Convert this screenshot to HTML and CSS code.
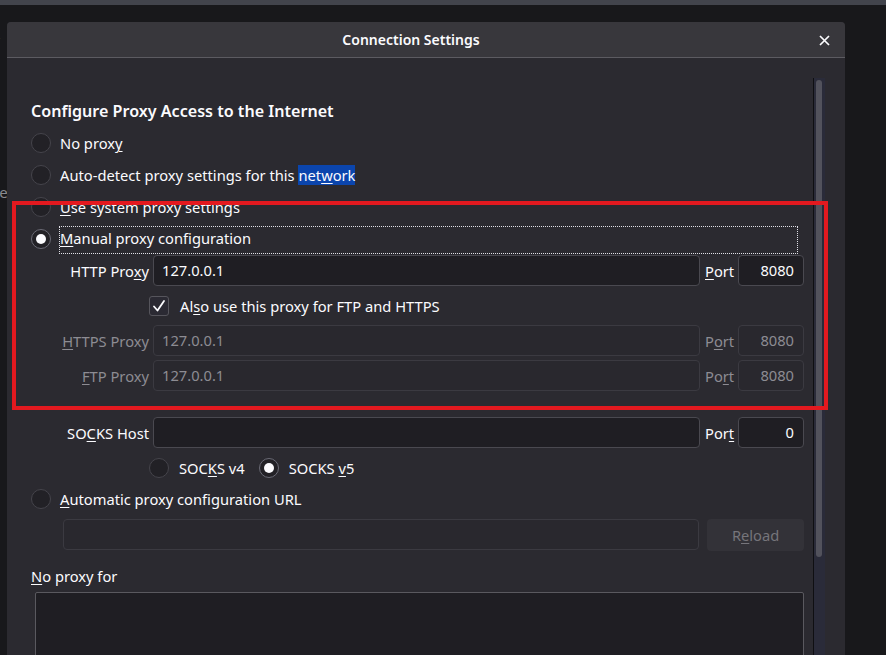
FILE: index.html
```html
<!DOCTYPE html>
<html>
<head>
<meta charset="utf-8">
<link rel="stylesheet" href="styles.css">
</head>
<body>
<div class="topstrip"></div>
<div class="behind"><span class="behind-r">r</span><span class="behind-e">ne</span></div>
<div class="dialog">
  <div class="titlebar">
    <div class="title">Connection Settings</div>
    <div class="close">
      <svg width="11" height="11" viewBox="0 0 11 11"><path d="M1 1 L10 10 M10 1 L1 10" stroke="#fbfbfe" stroke-width="1.7" fill="none"/></svg>
    </div>
  </div>
  <div class="body">
    <div class="content">
      <h1 class="heading">Configure Proxy Access to the Internet</h1>
      <div class="radio-row"><span class="radio"></span><span class="rlabel">No prox<u>y</u></span></div>
      <div class="radio-row"><span class="radio"></span><span class="rlabel">Auto-detect proxy settings for this <span class="sel">net<u>w</u>ork</span></span></div>
      <div class="radio-row"><span class="radio"></span><span class="rlabel"><u>U</u>se system proxy settings</span></div>
      <div class="radio-row"><span class="radio on"></span><span class="rlabel focus"><u>M</u>anual proxy configuration</span></div>

      <div class="grid">
        <label class="flabel">HTTP Pro<u>x</u>y</label>
        <div class="field"><div class="input">127.0.0.1</div></div>
        <label class="plabel"><u>P</u>ort</label>
        <div class="input port">8080</div>

        <div></div>
        <div class="check-row"><span class="checkbox"><svg width="14" height="14" viewBox="0 0 14 14"><path d="M2 7.5 L5.5 11.5 L12 2" stroke="#fbfbfe" stroke-width="1.8" fill="none" stroke-linecap="round" stroke-linejoin="round"/></svg></span><span class="clabel">Al<u>s</u>o use this proxy for FTP and HTTPS</span></div>
        <div></div>
        <div></div>

        <label class="flabel dis"><u>H</u>TTPS Proxy</label>
        <div class="field"><div class="input dis">127.0.0.1</div></div>
        <label class="plabel dis">P<u>o</u>rt</label>
        <div class="input port dis">8080</div>

        <label class="flabel dis"><u>F</u>TP Proxy</label>
        <div class="field"><div class="input dis">127.0.0.1</div></div>
        <label class="plabel dis">Po<u>r</u>t</label>
        <div class="input port dis">8080</div>
      </div>

      <div class="grid socks">
        <label class="flabel">SO<u>C</u>KS Host</label>
        <div class="field"><div class="input"></div></div>
        <label class="plabel">Por<u>t</u></label>
        <div class="input port">0</div>
      </div>

      <div class="socks-ver">
        <span class="radio"></span><span class="vlabel">SOC<u>K</u>S v4</span>
        <span class="radio on"></span><span class="vlabel">SOCKS <u>v</u>5</span>
      </div>

      <div class="radio-row"><span class="radio"></span><span class="rlabel"><u>A</u>utomatic proxy configuration URL</span></div>
      <div class="url-row">
        <div class="input dis url"></div>
        <div class="button">R<u>e</u>load</div>
      </div>

      <div class="noproxy"><u>N</u>o proxy for</div>
      <div class="textarea"></div>
    </div>
    <div class="scrollbar"><div class="thumb"></div></div>
    <div class="rpad"></div>
  </div>
</div>
<div class="annot"></div>
</body>
</html>
```
FILE: styles.css
```css
* { box-sizing: border-box; }
html, body { margin: 0; padding: 0; }
body {
  width: 886px;
  height: 655px;
  overflow: hidden;
  background: #18181b;
  font-family: "Noto Sans", "Open Sans", sans-serif;
  font-size: 14.7px;
  color: #fbfbfe;
  position: relative;
}
u { text-decoration-thickness: 1px; text-underline-offset: 2px; }
.topstrip { height: 5px; background: #42444c; }
.behind { position: absolute; left: 0; top: 0; width: 7px; height: 655px; overflow: hidden; }
.behind-r { position: absolute; left: -6px; top: 30px; color: #3d6fb0; font-size: 15px; }
.behind-e { position: absolute; left: -10px; top: 182px; color: #8a8a90; font-size: 15px; }

.dialog {
  margin: 17px 0 0 7px;
  width: 838px;
  height: 633px;
  background: #2b2a30;
  border-radius: 4px 4px 0 0;
  overflow: hidden;
  display: flex;
  flex-direction: column;
  position: relative;
}
.titlebar {
  height: 36px;
  flex: none;
  display: grid;
  grid-template-columns: 1fr 30px;
  align-items: center;
  background: #38373c;
  border-bottom: 1px solid #5c5b61;
}
.title { text-align: center; font-weight: 600; font-size: 14px; }
.close { display: flex; align-items: center; padding-left: 4px; padding-top: 1px; }

.body { flex: 1; display: flex; padding-top: 20px; min-height: 0; }
.content { width: 806px; flex: none; padding: 21px 9px 0 24px; }
.scrollbar { width: 12px; flex: none; background: #2a2b39; border-left: 1px solid #0f0f12; padding: 2px 0 0 2px; }
.thumb { width: 6px; height: 477px; background: #52525c; border-radius: 3px; }
.rpad { flex: 1; }

.heading { margin: 0 0 4px; font-size: 16.1px; font-weight: 600; line-height: 24px; }

.radio-row { height: 32px; display: flex; align-items: center; }
.radio {
  width: 20px; height: 20px; flex: none;
  border-radius: 50%;
  border: 1px solid #45444b;
  background: #222126;
  display: inline-flex; align-items: center; justify-content: center;
}
.radio.on { border-color: #6b6b76; background: #222126; }
.radio.on::after { content: ""; width: 10px; height: 10px; border-radius: 50%; background: #fbfbfe; }
.rlabel { margin-left: 9px; line-height: 20px; }
.rlabel.focus { flex: 1; margin-right: 6px; padding-bottom: 4px; margin-top: 1px; line-height: 22px; border: 1px dotted #e0e0e6; margin-left: 8px; }
.sel { background: #0b45ad; }

.grid {
  display: grid;
  grid-template-columns: 122px 552px 33px 66px;
  grid-auto-rows: 31px;
  row-gap: 4px;
  align-items: center;
}
.flabel { text-align: right; padding-right: 4px; white-space: nowrap; }
.plabel { white-space: nowrap; }
.dis { color: #8d8c93; }
.field { height: 31px; }
.input {
  width: 547px;
  height: 31px;
  background: #1f1e23;
  border: 1px solid #4a4950;
  border-radius: 4px;
  padding: 0 8px;
  line-height: 29px;
  white-space: nowrap;
}
.input.dis { background: #29282e; border-color: #3b3a41; }
.input.port { width: 66px; text-align: right; padding-right: 9px; }
.check-row { display: flex; align-items: center; margin-left: -4px; }
.checkbox {
  width: 20px; height: 20px; flex: none;
  border: 1px solid #56555c; border-radius: 3px;
  background: #2b2a33;
  display: inline-flex; align-items: center; justify-content: center;
}
.clabel { margin-left: 11px; }

.socks { margin-top: 26px; }
.socks-ver { height: 31px; margin-top: 4px; display: flex; align-items: center; padding-left: 118px; }
.vlabel { margin-left: 10px; margin-right: 14px; }

.url-row { display: flex; margin-top: 4px; padding-left: 32px; gap: 8px; }
.input.url { width: 637px; }
.button {
  width: 97px; height: 32px;
  background: #333238;
  border-radius: 4px;
  color: #76757b;
  text-align: center;
  line-height: 32px;
}
.noproxy { margin-top: 14px; line-height: 22px; }
.textarea {
  margin: 5px 0 0 4px;
  width: 769px;
  height: 80px;
  background: #1f1e23;
  border: 1px solid #5a595f;
  border-radius: 2px;
}

.annot {
  position: absolute;
  left: 12px; top: 201px;
  width: 816px; height: 209px;
  border: 4px solid #e3191f;
  pointer-events: none;
}
```
